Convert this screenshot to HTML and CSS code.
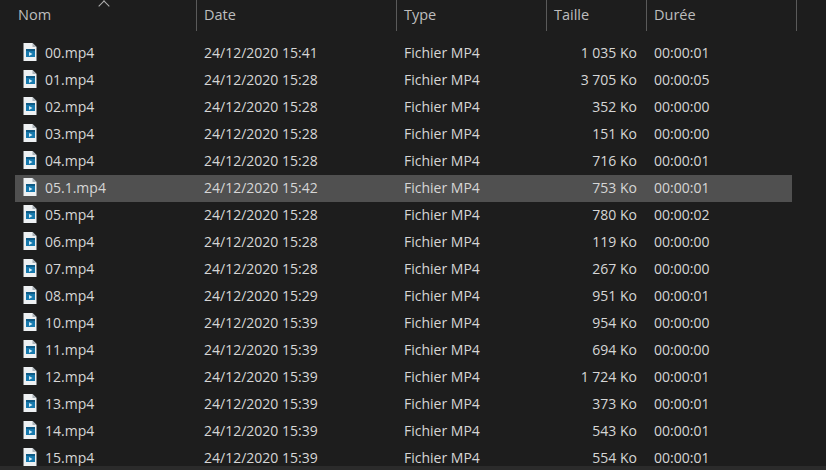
FILE: index.html
```html
<!DOCTYPE html>
<html lang="fr">
<head>
  <meta charset="UTF-8" />
  <meta name="viewport" content="width=device-width, initial-scale=1.0" />
  <title>Explorateur de fichiers</title>
  <link rel="stylesheet" href="styles.css">
</head>
<body>
  <svg class="sprite" width="0" height="0">
    <symbol id="mp4" viewBox="0 0 14 18">
      <path d="M0.500 0H9.500L13.500 4V18H0.500Z" fill="#eef1f3"/>
      <path d="M9.500 0V4H13.500Z" fill="#aab2b8"/>
      <rect x="3" y="6" width="9" height="8" fill="#1679ad"/>
      <rect x="3" y="6" width="9" height="2" fill="#0e5a85"/>
      <path d="M6 9V13L9.500 11Z" fill="#d5ecf7"/>
    </symbol>
  </svg>
  <div class="list">
    <div class="sort-arrow"></div>
    <div class="row head">
      <div class="col name"><span>Nom</span></div>
      <div class="col date"><span>Date</span></div>
      <div class="col type"><span>Type</span></div>
      <div class="col size"><span>Taille</span></div>
      <div class="col time"><span>Durée</span></div>
    </div>
    <div class="files" id="files"></div>
    <div class="bottom-bar"></div>
  </div>
  <script>
  const files = [
    ['00.mp4', '15:41', '1 035 Ko', '00:00:01'],
    ['01.mp4', '15:28', '3 705 Ko', '00:00:05'],
    ['02.mp4', '15:28', '352 Ko', '00:00:00'],
    ['03.mp4', '15:28', '151 Ko', '00:00:00'],
    ['04.mp4', '15:28', '716 Ko', '00:00:01'],
    ['05.1.mp4', '15:42', '753 Ko', '00:00:01'],
    ['05.mp4', '15:28', '780 Ko', '00:00:02'],
    ['06.mp4', '15:28', '119 Ko', '00:00:00'],
    ['07.mp4', '15:28', '267 Ko', '00:00:00'],
    ['08.mp4', '15:29', '951 Ko', '00:00:01'],
    ['10.mp4', '15:39', '954 Ko', '00:00:00'],
    ['11.mp4', '15:39', '694 Ko', '00:00:00'],
    ['12.mp4', '15:39', '1 724 Ko', '00:00:01'],
    ['13.mp4', '15:39', '373 Ko', '00:00:01'],
    ['14.mp4', '15:39', '543 Ko', '00:00:01'],
    ['15.mp4', '15:39', '554 Ko', '00:00:01']
  ];

  const container = document.getElementById('files');
  files.forEach(file => {
    const div = document.createElement('div');
    div.className = file[0] === '05.1.mp4' ? 'row file selected' : 'row file';
    div.innerHTML = `
      <div class="col name"><svg class="icon"><use href="#mp4"/></svg>${file[0]}</div>
      <div class="col date">24/12/2020 ${file[1]}</div>
      <div class="col type">Fichier MP4</div>
      <div class="col size">${file[2]}</div>
      <div class="col time">${file[3]}</div>
    `;
    container.appendChild(div);
  });
  </script>
</body>
</html>
```

FILE: styles.css
```css
html, body { height: 100%; }
body { margin: 0; background: #1d1d1d; color: #d6d6d6; font-family: "Open Sans", "Noto Sans", sans-serif; font-size: 14px; overflow: hidden; }
.sprite { display: block; }
.list { position: relative; padding-left: 15px; height: 470px; overflow: hidden; }
.row { display: flex; width: 777px; }
.col { box-sizing: border-box; white-space: nowrap; padding-left: 7px; }
.name { width: 182px; padding-left: 8px; }
.date { width: 200px; }
.type { width: 150px; }
.size { width: 100px; }
.time { width: 145px; }
.head { height: 31px; width: 783px; color: #bdbdbd; font-size: 14.5px; }
.head .col { border-right: 1px solid #5a5a5a; line-height: 29px; }
.head .name { padding-left: 3px; }
.head .time { width: 150px; }
.files { padding-top: 9px; }
.file { height: 27px; line-height: 25px; }
.file .col { padding-bottom: 2px; }
.file .name { display: flex; align-items: center; padding-left: 8px; }
.file .size { text-align: right; padding-right: 10px; }
.selected { background: #505050; }
.icon { width: 14px; height: 18px; margin-right: 8px; margin-top: -1px; flex: none; }
.sort-arrow { position: absolute; left: 100px; top: 2px; width: 7px; height: 7px; border-left: 1px solid #b0b0b0; border-top: 1px solid #b0b0b0; transform: rotate(45deg); }
.bottom-bar { position: absolute; left: 0; right: 0; bottom: 0; height: 4px; background: #2b2b2b; }
```
